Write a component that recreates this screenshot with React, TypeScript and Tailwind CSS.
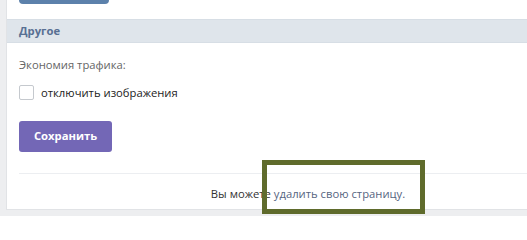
export default function App() {
  return (
    <div
      className="relative h-[216px] w-[527px] overflow-hidden bg-[#edeef0]"
      style={{ fontFamily: '"Open Sans", "Noto Sans", sans-serif' }}
    >
      <div className="ml-[6px] w-[604px] h-[210px] border border-t-0 border-[#e1e3e6] bg-white">
        <div className="h-[19px]">
          <div className="ml-[12px] h-[4px] w-[90px] rounded-b-[4px] bg-[#5c81ab]" />
        </div>

        <div className="h-[24px] flex items-center px-[12px] bg-[#dfe5eb] border-y border-[#d7dee5]">
          <span className="text-[11.25px] font-bold text-[#587093]">Другое</span>
        </div>

        <div className="px-[12px]">
          <div className="mt-[13px] text-[11.25px] leading-[17px] text-[#656565]">Экономия трафика:</div>

          <label className="mt-[11px] flex items-center gap-[7px]">
            <span className="h-[15px] w-[15px] rounded-[2px] border border-[#c5c9ce] bg-white" />
            <span className="text-[11.25px] leading-[17px] text-[#222222]">отключить изображения</span>
          </label>

          <button className="mt-[20px] h-[31px] w-[93px] rounded-[3px] bg-[#7367b6] text-[11.25px] font-bold text-white">
            Сохранить
          </button>

          <div className="mt-[21px] border-t border-[#eceef1]" />

          <div className="mt-[11px] text-center text-[11.25px] leading-[17px] text-[#333333]">
            Вы можете <a className="text-[#56657f]">удалить свою страницу.</a>
          </div>
        </div>
      </div>

      <div className="absolute left-[262px] top-[160px] h-[54px] w-[163px] border-[5px] border-[#5f6b2c]" />
    </div>
  )
}
